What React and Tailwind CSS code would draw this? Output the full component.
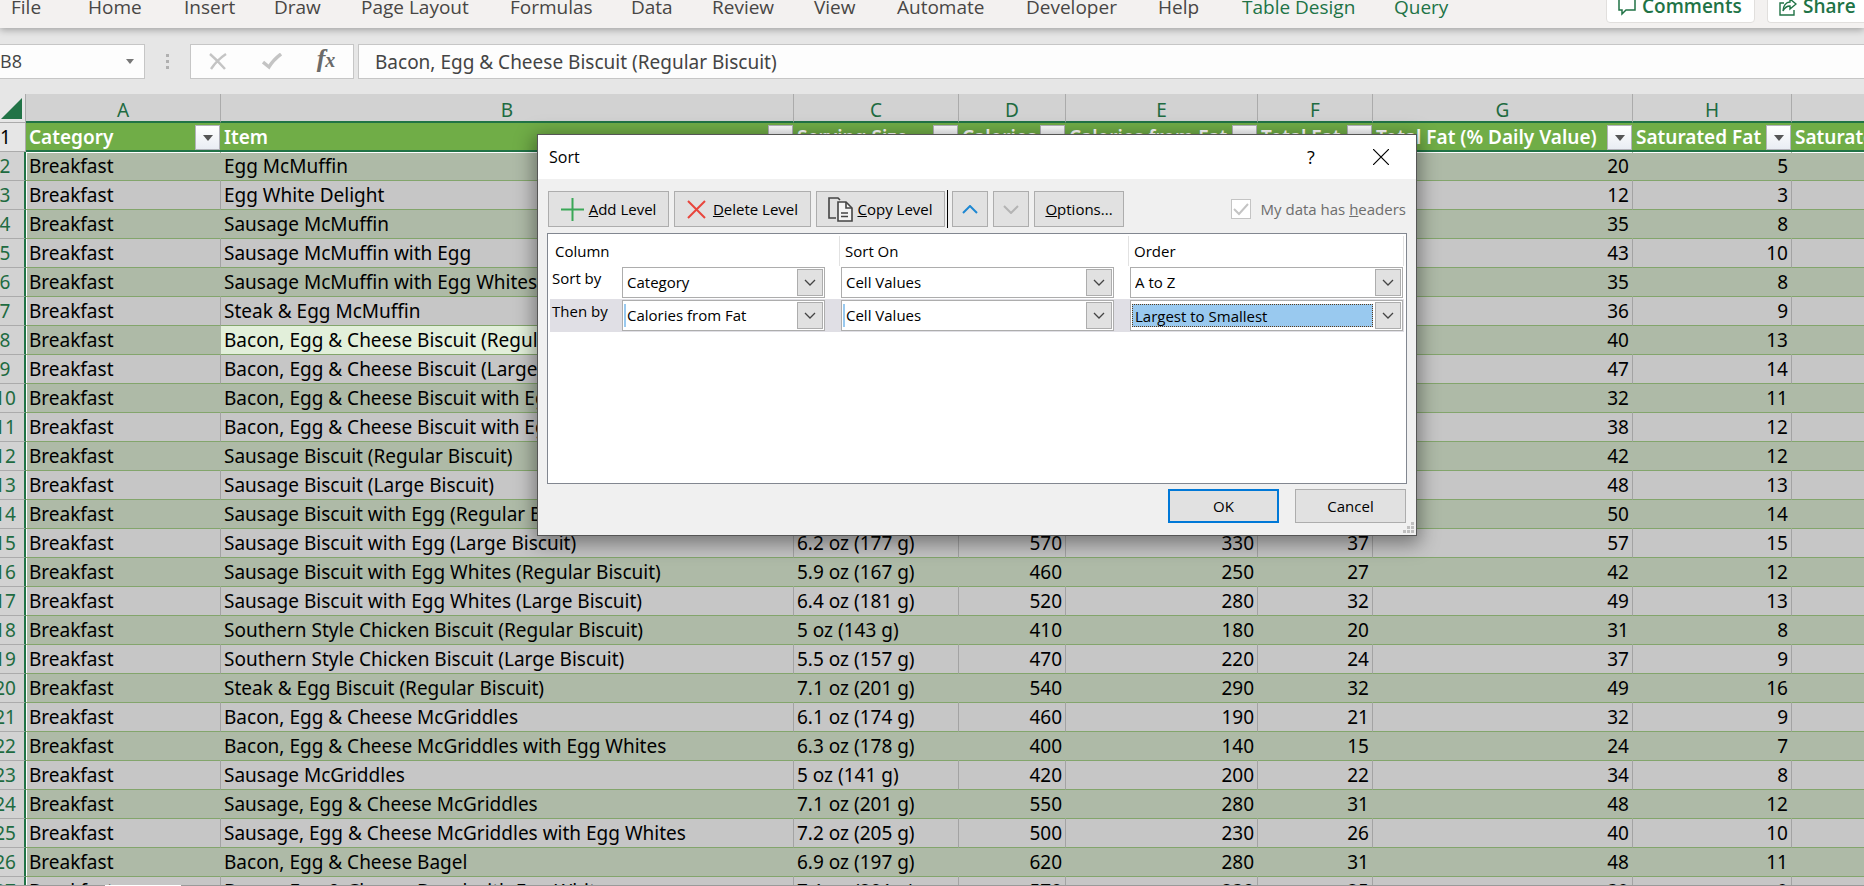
import React from "react";

const tabs = [
  "File", "Home", "Insert", "Draw", "Page Layout", "Formulas", "Data",
  "Review", "View", "Automate", "Developer", "Help",
];
const contextTabs = ["Table Design", "Query"];

const columns = [
  { letter: "A", title: "Category" },
  { letter: "B", title: "Item" },
  { letter: "C", title: "Serving Size" },
  { letter: "D", title: "Calories" },
  { letter: "E", title: "Calories from Fat" },
  { letter: "F", title: "Total Fat" },
  { letter: "G", title: "Total Fat (% Daily Value)" },
  { letter: "H", title: "Saturated Fat" },
  { letter: "", title: "Saturated Fat (% Daily Value)" },
];

const items = [
  ["Egg McMuffin", "4.8 oz (136 g)", 300, 120, 13, 20, 5],
  ["Egg White Delight", "4.8 oz (135 g)", 250, 70, 8, 12, 3],
  ["Sausage McMuffin", "3.9 oz (111 g)", 370, 200, 23, 35, 8],
  ["Sausage McMuffin with Egg", "5.7 oz (161 g)", 450, 250, 28, 43, 10],
  ["Sausage McMuffin with Egg Whites", "5.7 oz (161 g)", 400, 210, 23, 35, 8],
  ["Steak & Egg McMuffin", "6.5 oz (185 g)", 430, 210, 23, 36, 9],
  ["Bacon, Egg & Cheese Biscuit (Regular Biscuit)", "5.3 oz (150 g)", 460, 230, 26, 40, 13],
  ["Bacon, Egg & Cheese Biscuit (Large Biscuit)", "5.8 oz (164 g)", 520, 270, 30, 47, 14],
  ["Bacon, Egg & Cheese Biscuit with Egg Whites (Regular Biscuit)", "5.4 oz (153 g)", 410, 180, 20, 32, 11],
  ["Bacon, Egg & Cheese Biscuit with Egg Whites (Large Biscuit)", "5.9 oz (167 g)", 470, 220, 25, 38, 12],
  ["Sausage Biscuit (Regular Biscuit)", "4.1 oz (117 g)", 430, 240, 27, 42, 12],
  ["Sausage Biscuit (Large Biscuit)", "4.6 oz (131 g)", 480, 280, 31, 48, 13],
  ["Sausage Biscuit with Egg (Regular Biscuit)", "5.7 oz (163 g)", 510, 290, 33, 50, 14],
  ["Sausage Biscuit with Egg (Large Biscuit)", "6.2 oz (177 g)", 570, 330, 37, 57, 15],
  ["Sausage Biscuit with Egg Whites (Regular Biscuit)", "5.9 oz (167 g)", 460, 250, 27, 42, 12],
  ["Sausage Biscuit with Egg Whites (Large Biscuit)", "6.4 oz (181 g)", 520, 280, 32, 49, 13],
  ["Southern Style Chicken Biscuit (Regular Biscuit)", "5 oz (143 g)", 410, 180, 20, 31, 8],
  ["Southern Style Chicken Biscuit (Large Biscuit)", "5.5 oz (157 g)", 470, 220, 24, 37, 9],
  ["Steak & Egg Biscuit (Regular Biscuit)", "7.1 oz (201 g)", 540, 290, 32, 49, 16],
  ["Bacon, Egg & Cheese McGriddles", "6.1 oz (174 g)", 460, 190, 21, 32, 9],
  ["Bacon, Egg & Cheese McGriddles with Egg Whites", "6.3 oz (178 g)", 400, 140, 15, 24, 7],
  ["Sausage McGriddles", "5 oz (141 g)", 420, 200, 22, 34, 8],
  ["Sausage, Egg & Cheese McGriddles", "7.1 oz (201 g)", 550, 280, 31, 48, 12],
  ["Sausage, Egg & Cheese McGriddles with Egg Whites", "7.2 oz (205 g)", 500, 230, 26, 40, 10],
  ["Bacon, Egg & Cheese Bagel", "6.9 oz (197 g)", 620, 280, 31, 48, 11],
  ["Bacon, Egg & Cheese Bagel with Egg Whites", "7.1 oz (201 g)", 570, 230, 25, 39, 9],
];

function Ribbon() {
  return (
    <nav className="relative z-10 flex h-7 shrink-0 items-start bg-[#f3f1f0] shadow-[0_2px_7px_rgba(0,0,0,0.3)]">
      <div className="grid flex-1 grid-cols-[77px_96px_90px_87px_149px_121px_81px_102px_83px_129px_132px_84px_152px_1fr] pl-[11px]">
        {tabs.map((t) => (
          <button key={t} type="button" className="-mt-2 h-[30px] text-left text-[19px] leading-[30px] whitespace-nowrap text-[#484644]">
            {t}
          </button>
        ))}
        {contextTabs.map((t) => (
          <button key={t} type="button" className="-mt-2 h-[30px] text-left text-[19px] leading-[30px] whitespace-nowrap text-[#217346]">
            {t}
          </button>
        ))}
      </div>
      <div className="flex gap-3">
        <button type="button" className="-mt-2 flex h-[31px] w-[149px] items-center gap-[6px] rounded border border-[#e1dfdd] bg-white pb-[2px] pl-[11px] text-[19px] font-semibold text-[#217346]">
          <svg width="18" height="18" viewBox="0 0 18 18" fill="none" stroke="currentColor" strokeWidth="1.5" aria-hidden="true">
            <path d="M1 1H17V12H8L4 16V12H1Z" />
          </svg>
          Comments
        </button>
        <button type="button" className="-mt-2 flex h-[31px] w-[97px] items-center gap-[6px] rounded-l border border-r-0 border-[#e1dfdd] bg-white pb-[2px] pl-[11px] text-[19px] font-semibold text-[#217346]">
          <svg width="18" height="18" viewBox="0 0 18 18" fill="none" stroke="currentColor" strokeWidth="1.4" aria-hidden="true">
            <path d="M5 5H1V17H15V12" />
            <path d="M11 1L17 6L11 11V8C8 8 6 9 4 13C4 8 7 4 11 4Z" />
          </svg>
          Share
        </button>
      </div>
    </nav>
  );
}

function FormulaBar() {
  return (
    <div className="flex h-[66px] shrink-0 items-start pt-4">
      <div className="flex h-[35px] w-[145px] items-center border border-l-0 border-[#c6c6c6] bg-[#fdfdfd]">
        <input aria-label="Name box" defaultValue="B8" className="w-0 flex-1 bg-transparent text-[18px] text-[#444] outline-none" />
        <button type="button" aria-label="Name list" className="flex h-full w-7 items-center justify-center">
          <svg width="8" height="5" viewBox="0 0 8 5" fill="#777" aria-hidden="true"><path d="M0 0H8L4 5Z" /></svg>
        </button>
      </div>
      <div className="flex h-[35px] w-[45px] flex-col items-center justify-center gap-[3px]">
        <span className="size-[3px] bg-[#b0b0b0]" />
        <span className="size-[3px] bg-[#b0b0b0]" />
        <span className="size-[3px] bg-[#b0b0b0]" />
      </div>
      <div className="flex h-[35px] w-[164px] items-center border border-[#c6c6c6] bg-[#fdfdfd] text-[#c4c4c4]">
        <button type="button" aria-label="Cancel entry" className="flex flex-1 justify-center">
          <svg width="18" height="17" viewBox="0 0 18 17" fill="none" stroke="currentColor" strokeWidth="2.4" aria-hidden="true"><path d="M1 1Q9 8 16 16M17 1Q8 7 2 16" /></svg>
        </button>
        <button type="button" aria-label="Enter" className="flex flex-1 justify-center">
          <svg width="20" height="17" viewBox="0 0 20 17" fill="none" stroke="currentColor" strokeWidth="3.4" aria-hidden="true"><path d="M1 9L7 14Q11 7 19 1" /></svg>
        </button>
        <button type="button" aria-label="Insert function" className="flex-1 pb-1 font-['Liberation_Serif',serif] text-[26px] leading-7 font-semibold text-[#6a6a6a] italic">
          f<span className="text-[20px]">x</span>
        </button>
      </div>
      <input
        aria-label="Formula bar"
        defaultValue="Bacon, Egg & Cheese Biscuit (Regular Biscuit)"
        className="ml-1 h-[35px] min-w-0 flex-1 border border-r-0 border-[#c6c6c6] bg-[#fdfdfd] pl-4 font-['Noto_Sans',sans-serif] text-[19px] text-[#444] outline-none"
      />
    </div>
  );
}

function FilterButton({ title }) {
  return (
    <button type="button" aria-label={"Filter " + title} className="mr-px flex h-[25px] w-[25px] shrink-0 items-center justify-center border border-[#b3b3bb] bg-linear-to-b from-white to-[#e9edf3]">
      <svg width="10" height="6" viewBox="0 0 10 6" fill="#555" aria-hidden="true"><path d="M0 0H10L5 6Z" /></svg>
    </button>
  );
}

function cellClass(i, j) {
  const align = j > 2 ? "text-right" : "text-left";
  const fill = i === 6 && j === 1 ? "bg-[#e2efda]" : "";
  let edge = "";
  if (i === 0 && j === 0) edge = "shadow-[inset_1px_1px_0_#fff]";
  else if (i === 0) edge = "shadow-[inset_0_1px_0_#fff]";
  else if (j === 0) edge = "shadow-[inset_1px_0_0_#fff]";
  return `overflow-hidden border-r border-b border-b-[#83a56c] p-0 px-[3px] pt-px group-odd:border-r-[#a3a3a3] group-even:border-r-transparent last:border-r-0 ${align} ${fill} ${edge}`;
}

function Sheet() {
  return (
    <div className="min-h-0 flex-1 overflow-hidden">
      <table className="-ml-[14px] w-[calc(100%+14px)] table-fixed border-separate border-spacing-0 font-['Noto_Sans',sans-serif] text-[19px] leading-[27px] whitespace-nowrap text-black">
        <colgroup>
          <col className="w-[40px]" />
          <col className="w-[195px]" />
          <col className="w-[573px]" />
          <col className="w-[165px]" />
          <col className="w-[107px]" />
          <col className="w-[192px]" />
          <col className="w-[115px]" />
          <col className="w-[260px]" />
          <col className="w-[159px]" />
          <col />
        </colgroup>
        <thead>
          <tr className="h-[29px]">
            <th aria-label="Select all" className="border-r border-b border-[#ababab] bg-[#e6e6e6] p-0">
              <svg className="mr-[3px] ml-auto" width="21" height="21" viewBox="0 0 21 21" fill="#217346" aria-hidden="true"><path d="M21 0V21H0Z" /></svg>
            </th>
            {columns.map((c) => (
              <th key={c.title} scope="col" className="border-r border-b-2 border-r-[#ababab] border-b-[#217346] bg-[#d2d2d2] p-0 pt-[5px] leading-[22px] font-normal text-[#1e6b41] last:border-r-0">
                {c.letter}
              </th>
            ))}
          </tr>
        </thead>
        <tbody>
          <tr className="h-[29px]">
            <th scope="row" className="border-r border-b border-[#ababab] bg-[#e6e6e6] p-0 pt-px font-normal">1</th>
            {columns.map((c) => (
              <td key={c.title} className="overflow-hidden border-b-2 border-[#217346] bg-[#70ad47] p-0 pl-[3px] leading-[25px] font-semibold text-white">
                <div className="flex items-end justify-between">
                  <span className="pt-[2px]">{c.title}</span>
                  <FilterButton title={c.title} />
                </div>
              </td>
            ))}
          </tr>
          {items.map((row, i) => (
            <tr key={row[0]} className="group h-[29px] odd:bg-[#c6c6c6] even:bg-[#aebaa7]">
              <th scope="row" className="border-r-2 border-b border-r-[#217346] border-b-[#ababab] bg-[#d2d2d2] p-0 pt-px font-normal text-[#1e6b41]">{i + 2}</th>
              {["Breakfast", ...row, ""].map((v, j) => (
                <td key={j} className={cellClass(i, j)}>{v}</td>
              ))}
            </tr>
          ))}
        </tbody>
      </table>
    </div>
  );
}

function Combo({ label, value, state }) {
  return (
    <div className="flex h-[31px] items-stretch border border-[#adadad] bg-white p-px">
      <select
        aria-label={label}
        defaultValue={value}
        className={
          "my-[2px] mr-[2px] min-w-0 flex-1 appearance-none text-[15px] text-black outline-none " +
          (state === "active"
            ? "border border-dotted border-[#5a3a1a] bg-[#99c9ef] pl-[2px]"
            : state === "row"
            ? "border-l-2 border-[#99c9ef] pl-px"
            : "pl-[3px]")
        }
      >
        <option>{value}</option>
      </select>
      <span className="flex w-[26px] items-center justify-center border border-[#adadad] bg-[#e1e1e1]">
        <svg width="12" height="7" viewBox="0 0 12 7" fill="none" stroke="#444" strokeWidth="1.3" aria-hidden="true"><path d="M1 1L6 6L11 1" /></svg>
      </span>
    </div>
  );
}

const dialogButton = "flex h-9 items-center justify-center border border-[#adadad] bg-[#e1e1e1]";

function SortRow({ label, column, order, current }) {
  return (
    <div className={"flex h-[33px] items-start pt-px pl-[2px] " + (current ? "bg-[#e0dfe5]" : "")}>
      <span className="w-[70px] leading-[22px]">{label}</span>
      <div className="w-[203px]"><Combo label={label + " column"} value={column} state={current ? "row" : ""} /></div>
      <div className="ml-4 w-[273px]"><Combo label={label + " sort on"} value="Cell Values" state={current ? "row" : ""} /></div>
      <div className="ml-4 w-[273px]"><Combo label={label + " order"} value={order} state={current ? "active" : ""} /></div>
    </div>
  );
}

function SortDialog() {
  return (
    <div role="dialog" aria-label="Sort" className="absolute top-[134px] left-[537px] z-20 w-[880px] border border-[#555] bg-[#f0f0f0] text-[15px] text-black shadow-[0_5px_18px_3px_rgba(0,0,0,0.4)]">
      <div className="flex h-11 items-center bg-white pl-[11px]">
        <h2 className="flex-1 text-[16px]">Sort</h2>
        <button type="button" aria-label="Help" className="w-[70px] text-[18px]">?</button>
        <button type="button" aria-label="Close" className="flex w-[70px] justify-center">
          <svg width="16" height="16" viewBox="0 0 16 16" stroke="#000" strokeWidth="1.2" aria-hidden="true"><path d="M0 0L16 16M16 0L0 16" /></svg>
        </button>
      </div>
      <div className="flex items-center gap-[5px] px-[10px] pt-[11px]">
        <button type="button" className={dialogButton + " w-[121px] gap-[5px]"}>
          <svg width="23" height="23" viewBox="0 0 23 23" stroke="#3aa757" strokeWidth="2" aria-hidden="true"><path d="M0 11.500H23M11.500 0V23" /></svg>
          <span><u>A</u>dd Level</span>
        </button>
        <button type="button" className={dialogButton + " w-[137px] gap-[7px]"}>
          <svg width="19" height="19" viewBox="0 0 19 19" stroke="#e8453c" strokeWidth="2" aria-hidden="true"><path d="M1 1L18 18M18 1L1 18" /></svg>
          <span><u>D</u>elete Level</span>
        </button>
        <button type="button" className={dialogButton + " w-[129px] gap-1"}>
          <svg width="25" height="25" viewBox="0 0 25 25" fill="none" stroke="#444" strokeWidth="1.6" aria-hidden="true">
            <path d="M8 21H1V1H10L12 3" />
            <path d="M10 5H18L24 11V24H10Z" fill="#f4f4f4" />
            <path d="M18 5V11H24M13 16H20M13 19.500H20" />
          </svg>
          <span><u>C</u>opy Level</span>
        </button>
        <div className="-mx-[3px] h-[38px] w-px bg-black" />
        <button type="button" aria-label="Move up" className={dialogButton + " ml-[2px] w-9"}>
          <svg width="16" height="9" viewBox="0 0 16 9" fill="none" stroke="#1e88d2" strokeWidth="2" aria-hidden="true"><path d="M1 8L8 1L15 8" /></svg>
        </button>
        <button type="button" aria-label="Move down" className={dialogButton + " w-9"}>
          <svg width="16" height="9" viewBox="0 0 16 9" fill="none" stroke="#b4b4b4" strokeWidth="2" aria-hidden="true"><path d="M1 1L8 8L15 1" /></svg>
        </button>
        <button type="button" className={dialogButton + " w-[90px]"}><span><u>O</u>ptions...</span></button>
        <label className="ml-auto flex items-center gap-[10px] text-[#6d6d6d]">
          <span className="grid size-5">
            <input type="checkbox" defaultChecked disabled className="col-start-1 row-start-1 size-5 appearance-none border border-[#c4c4c4] bg-white" />
            <svg className="pointer-events-none col-start-1 row-start-1 m-[2px]" width="16" height="16" viewBox="0 0 16 16" fill="none" stroke="#c4c4c4" strokeWidth="2" aria-hidden="true"><path d="M1 8L6 13L15 3" /></svg>
          </span>
          <span>My data has <u>h</u>eaders</span>
        </label>
      </div>
      <div className="mx-[9px] mt-[5px] h-[251px] border border-[#828790] bg-white px-[2px] pt-[2px]">
        <div className="flex h-[30px] items-center">
          <span className="h-full w-[290px] border-r border-[#e2e2e2] pl-[5px] leading-[30px]">Column</span>
          <span className="h-full w-[289px] border-r border-[#e2e2e2] pl-[5px] leading-[30px]">Sort On</span>
          <span className="h-full flex-1 border-r border-[#e2e2e2] pl-[5px] leading-[30px]">Order</span>
        </div>
        <SortRow label="Sort by" column="Category" order="A to Z" />
        <SortRow label="Then by" column="Calories from Fat" order="Largest to Smallest" current />
      </div>
      <div className="flex justify-end gap-4 px-[10px] pt-[5px] pb-3">
        <button type="button" className="h-[34px] w-[111px] border-2 border-[#0078d7] bg-[#e1e1e1]">OK</button>
        <button type="button" className="h-[34px] w-[111px] border border-[#adadad] bg-[#e1e1e1]">Cancel</button>
      </div>
      <svg className="absolute right-[2px] bottom-[2px]" width="11" height="11" viewBox="0 0 11 11" fill="#bfbfbf" aria-hidden="true">
        <path d="M8 0h3v3h-3zM4 4h3v3h-3zM8 4h3v3h-3zM0 8h3v3h-3zM4 8h3v3h-3zM8 8h3v3h-3z" />
      </svg>
    </div>
  );
}

export default function App() {
  return (
    <div className="relative flex h-screen flex-col overflow-hidden bg-[#e6e6e6] font-['Open_Sans',sans-serif]">
      <Ribbon />
      <FormulaBar />
      <Sheet />
      <div className="flex h-px shrink-0 bg-[#9a9a9a] pl-[105px]">
        <span className="w-[76px] bg-white" />
      </div>
      <SortDialog />
    </div>
  );
}
